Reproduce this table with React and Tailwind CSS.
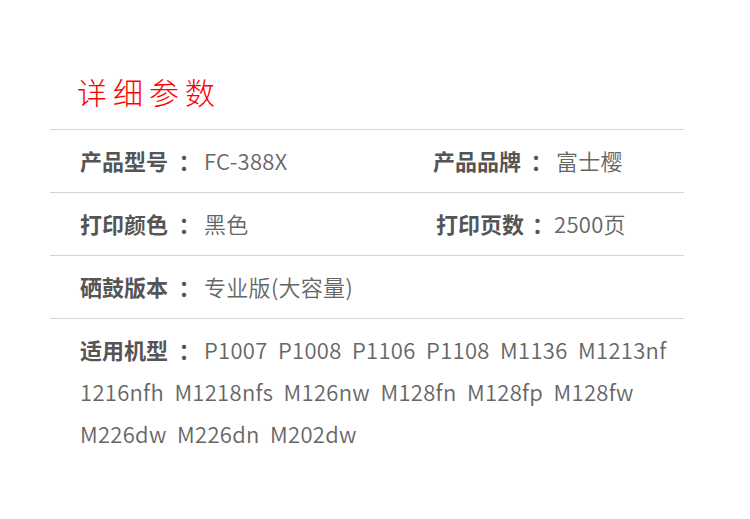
import React from "react";

const font = { fontFamily: '"Noto Sans CJK SC", "Noto Sans", sans-serif' };

const Label = ({ children }) => (
  <span className="font-bold text-[#555]">{children}</span>
);

const Colon = () => (
  <span className="inline-block w-[36px] pl-[7px] text-center font-bold text-[#555]">：</span>
);

const Value = ({ children }) => (
  <span className="[font-weight:350] tracking-[0.3px] text-[#666]">{children}</span>
);

const App = () => {
  return (
    <div className="w-[750px] h-[519px] bg-white" style={font}>
      <div className="pt-[71px] px-[50px]">
        <h2 className="pl-[27px] text-[30px] leading-[40px] tracking-[6px] text-[#ff0000] font-light mb-[18px]">
          详细参数
        </h2>
        <div className="w-[634px] text-[22px] leading-[42px]">
          <div className="grid grid-cols-[353px_1fr] border-t border-[#d4d4d4] pt-[9px] pb-[11px] pl-[30px]">
            <div>
              <Label>产品型号</Label>
              <Colon />
              <Value>FC-388X</Value>
            </div>
            <div>
              <Label>产品品牌</Label>
              <span className="inline-block w-[35px] pl-[6px] text-center font-bold text-[#555]">：</span>
              <Value>富士樱</Value>
            </div>
          </div>
          <div className="grid grid-cols-[356px_1fr] border-t border-[#d4d4d4] pt-[9px] pb-[11px] pl-[30px]">
            <div>
              <Label>打印颜色</Label>
              <Colon />
              <Value>黑色</Value>
            </div>
            <div>
              <Label>打印页数</Label>
              <span className="inline-block w-[30px] pl-[8px] text-center font-bold text-[#555]">：</span>
              <Value>2500页</Value>
            </div>
          </div>
          <div className="border-t border-[#d4d4d4] pt-[9px] pb-[11px] pl-[30px]">
            <Label>硒鼓版本</Label>
            <Colon />
            <Value>专业版(大容量)</Value>
          </div>
          <div className="border-t border-[#d4d4d4] pt-[9px] pb-[11px] pl-[30px]">
            <Label>适用机型</Label>
            <Colon />
            <Value>
              P1007{"\u00a0\u00a0"}P1008{"\u00a0\u00a0"}P1106{"\u00a0\u00a0"}P1108{"\u00a0\u00a0"}M1136{"\u00a0\u00a0"}M1213nf
              <br />
              1216nfh{"\u00a0\u00a0"}M1218nfs{"\u00a0\u00a0"}M126nw{"\u00a0\u00a0"}M128fn{"\u00a0\u00a0"}M128fp{"\u00a0\u00a0"}M128fw
              <br />
              M226dw{"\u00a0\u00a0"}M226dn{"\u00a0\u00a0"}M202dw
            </Value>
          </div>
        </div>
      </div>
    </div>
  );
};

export default App;
